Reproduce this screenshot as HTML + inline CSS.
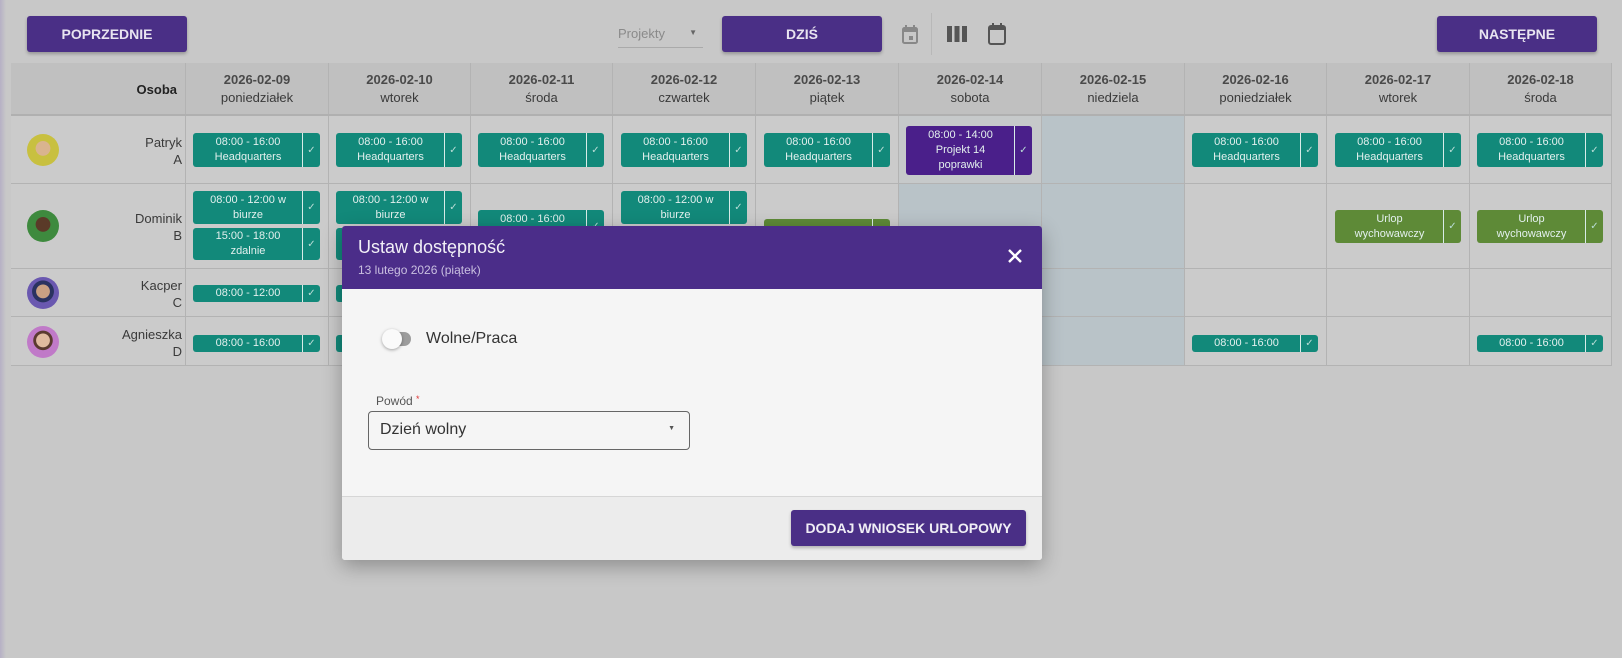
<!DOCTYPE html>
<html><head><meta charset="utf-8"><style>
*{box-sizing:border-box;margin:0;padding:0}
body{width:1622px;height:658px;background:#c8c8c8;font-family:"Liberation Sans",sans-serif;position:relative;overflow:hidden;color:#2a2a2a}
.a{position:absolute}
.btn{position:absolute;background:#4a2f86;color:#e8e4f0;font-weight:bold;font-size:14px;display:flex;align-items:center;justify-content:center;border-radius:3px;box-shadow:0 2px 3px rgba(0,0,0,.25)}
.hc{position:absolute;top:63px;height:52px;background:#c0c0c0;border-right:1px solid #b3b3b3;text-align:center;font-size:13px;color:#3a3a3a;line-height:18px;padding-top:8px}
.hc b{color:#4a4a4a}
.cell{position:absolute;border-right:1px solid #b3b3b3;border-bottom:1px solid #b3b3b3;background:#cbcbcb}
.we{background:#b9c3c8}
.ch{position:absolute;background:#12897a;color:#e3f0ee;font-size:11px;text-align:center;border-radius:3px;line-height:15px;display:flex;align-items:center;justify-content:center;padding-right:17px}
.ch:after{content:"✓";position:absolute;right:0;top:0;bottom:0;width:17px;border-left:1px solid #d8ece8;display:flex;align-items:center;justify-content:center;font-size:10px;color:#b9ddd6}
.g{background:#5e8a37}
.p{background:#4a1f8a}
.nm{position:absolute;right:0;width:150px;text-align:right;font-size:13px;line-height:17px;color:#3a3a3a}
.av{position:absolute;left:27px;width:32px;height:32px;border-radius:50%}
</style></head><body>
<div class="btn" style="left:27px;top:16px;width:160px;height:36px">POPRZEDNIE</div>
<div class="a" style="left:618px;top:26px;width:85px;height:22px;border-bottom:1px solid #aaa;font-size:13px;color:#8a8a8a">Projekty<span style="position:absolute;right:6px;top:2px;font-size:8px;color:#666">▼</span></div>
<div class="btn" style="left:722px;top:16px;width:160px;height:36px">DZIŚ</div>
<svg class="a" style="left:900px;top:24px" width="20" height="22" viewBox="0 0 20 22"><rect x="3" y="4" width="14" height="15" rx="1.5" fill="none" stroke="#888" stroke-width="2"/><rect x="3" y="4" width="14" height="4" fill="#888"/><rect x="5" y="1" width="2" height="4" fill="#888"/><rect x="13" y="1" width="2" height="4" fill="#888"/><rect x="9" y="12" width="4" height="4" fill="#888"/></svg>
<div class="a" style="left:931px;top:13px;width:1px;height:42px;background:#b8b8b8"></div>
<svg class="a" style="left:946px;top:25px" width="22" height="18"><rect x="1" y="1" width="5" height="16" fill="#555"/><rect x="8.5" y="1" width="5" height="16" fill="#555"/><rect x="16" y="1" width="5" height="16" fill="#555"/></svg>
<svg class="a" style="left:987px;top:22px" width="20" height="24" viewBox="0 0 20 24"><rect x="2" y="4" width="16" height="18" rx="2" fill="none" stroke="#555" stroke-width="2"/><rect x="2" y="4" width="16" height="4" fill="#555"/><rect x="5" y="1" width="2" height="4" fill="#555"/><rect x="13" y="1" width="2" height="4" fill="#555"/></svg>
<div class="btn" style="left:1437px;top:16px;width:160px;height:36px">NASTĘPNE</div>

<div class="hc" style="left:11px;width:175px;text-align:right;padding-right:8px;padding-top:18px;font-weight:bold;color:#222">Osoba</div>
<div class="hc" style="left:186px;width:143px"><b>2026-02-09</b><br>poniedziałek</div>
<div class="hc" style="left:329px;width:142px"><b>2026-02-10</b><br>wtorek</div>
<div class="hc" style="left:471px;width:142px"><b>2026-02-11</b><br>środa</div>
<div class="hc" style="left:613px;width:143px"><b>2026-02-12</b><br>czwartek</div>
<div class="hc" style="left:756px;width:143px"><b>2026-02-13</b><br>piątek</div>
<div class="hc" style="left:899px;width:143px"><b>2026-02-14</b><br>sobota</div>
<div class="hc" style="left:1042px;width:143px"><b>2026-02-15</b><br>niedziela</div>
<div class="hc" style="left:1185px;width:142px"><b>2026-02-16</b><br>poniedziałek</div>
<div class="hc" style="left:1327px;width:143px"><b>2026-02-17</b><br>wtorek</div>
<div class="hc" style="left:1470px;width:142px"><b>2026-02-18</b><br>środa</div>
<div class="a" style="left:11px;top:114px;width:1601px;height:2px;background:#b0b0b0"></div>

<div id="grid"></div>
<script>
var cols=[11,186,329,471,613,756,899,1042,1185,1327,1470,1612];
var rows=[116,184,269,317,366];
var h='';
for(var r=0;r<4;r++)for(var c=0;c<11;c++){
 var we=(c==7)||(c==6&&r>0);
 var bg=(c==6&&r==0)?'background:#c6c9ca;':'';
 h+='<div class="cell'+(we?' we':'')+'" style="'+bg+'left:'+cols[c]+'px;top:'+rows[r]+'px;width:'+(cols[c+1]-cols[c])+'px;height:'+(rows[r+1]-rows[r])+'px"></div>';
}
document.getElementById('grid').innerHTML=h;
</script>

<div class="av" style="top:134px;background:radial-gradient(circle at 50% 45%,#d9b48f 0 30%,#c8c040 32%)"></div>
<div class="nm" style="left:32px;top:134px">Patryk<br>A</div>
<div class="av" style="top:210px;background:radial-gradient(circle at 50% 45%,#5a3a28 0 30%,#3e8a3e 32%)"></div>
<div class="nm" style="left:32px;top:210px">Dominik<br>B</div>
<div class="av" style="top:277px;background:radial-gradient(circle at 50% 45%,#c9a083 0 28%,#2a3260 30% 45%,#6a58b0 47%)"></div>
<div class="nm" style="left:32px;top:277px">Kacper<br>C</div>
<div class="av" style="top:326px;background:radial-gradient(circle at 50% 45%,#e0bba0 0 28%,#5a3a30 30% 40%,#c07ac8 42%)"></div>
<div class="nm" style="left:32px;top:326px">Agnieszka<br>D</div>

<div class="ch" style="left:193px;top:133px;width:127px;height:34px">08:00 - 16:00<br>Headquarters</div>
<div class="ch" style="left:336px;top:133px;width:126px;height:34px">08:00 - 16:00<br>Headquarters</div>
<div class="ch" style="left:478px;top:133px;width:126px;height:34px">08:00 - 16:00<br>Headquarters</div>
<div class="ch" style="left:621px;top:133px;width:126px;height:34px">08:00 - 16:00<br>Headquarters</div>
<div class="ch" style="left:764px;top:133px;width:126px;height:34px">08:00 - 16:00<br>Headquarters</div>
<div class="ch p" style="left:906px;top:126px;width:126px;height:49px">08:00 - 14:00<br>Projekt 14<br>poprawki</div>
<div class="ch" style="left:1192px;top:133px;width:126px;height:34px">08:00 - 16:00<br>Headquarters</div>
<div class="ch" style="left:1335px;top:133px;width:126px;height:34px">08:00 - 16:00<br>Headquarters</div>
<div class="ch" style="left:1477px;top:133px;width:126px;height:34px">08:00 - 16:00<br>Headquarters</div>
<div class="ch" style="left:193px;top:191px;width:127px;height:33px">08:00 - 12:00 w<br>biurze</div>
<div class="ch" style="left:193px;top:228px;width:127px;height:32px">15:00 - 18:00<br>zdalnie</div>
<div class="ch" style="left:336px;top:191px;width:126px;height:33px">08:00 - 12:00 w<br>biurze</div>
<div class="ch" style="left:336px;top:228px;width:126px;height:32px">15:00 - 18:00<br>zdalnie</div>
<div class="ch" style="left:478px;top:210px;width:126px;height:33px">08:00 - 16:00<br>&nbsp;</div>
<div class="ch" style="left:621px;top:191px;width:126px;height:33px">08:00 - 12:00 w<br>biurze</div>
<div class="ch g" style="left:764px;top:219px;width:126px;height:33px">Dzień wolny</div>
<div class="ch g" style="left:1335px;top:210px;width:126px;height:33px">Urlop<br>wychowawczy</div>
<div class="ch g" style="left:1477px;top:210px;width:126px;height:33px">Urlop<br>wychowawczy</div>
<div class="ch" style="left:193px;top:285px;width:127px;height:17px">08:00 - 12:00</div>
<div class="ch" style="left:336px;top:285px;width:126px;height:17px">08:00 - 12:00</div>
<div class="ch" style="left:193px;top:335px;width:127px;height:17px">08:00 - 16:00</div>
<div class="ch" style="left:336px;top:335px;width:126px;height:17px">08:00 - 16:00</div>
<div class="ch" style="left:1192px;top:335px;width:126px;height:17px">08:00 - 16:00</div>
<div class="ch" style="left:1477px;top:335px;width:126px;height:17px">08:00 - 16:00</div>

<div class="a" style="left:0;top:0;width:6px;height:658px;background:linear-gradient(90deg,rgba(140,120,190,.3),transparent)"></div>

<div class="a" style="left:342px;top:226px;width:700px;height:334px;background:#f5f5f5;border-radius:3px;box-shadow:0 6px 20px rgba(0,0,0,.3);overflow:hidden">
 <div class="a" style="left:0;top:0;width:700px;height:63px;background:#4b2d89"></div>
 <div class="a" style="left:16px;top:11px;font-size:18px;color:#f2f0f7">Ustaw dostępność</div>
 <div class="a" style="left:16px;top:37px;font-size:12px;color:#c9bfe0">13 lutego 2026 (piątek)</div>
 <svg class="a" style="left:665px;top:22px" width="16" height="16"><path d="M2 2L14 14M14 2L2 14" stroke="#fff" stroke-width="2.4"/></svg>
 <div class="a" style="left:43px;top:106px;width:26px;height:14px;border-radius:7px;background:#9c9c9c"></div>
 <div class="a" style="left:40px;top:103px;width:20px;height:20px;border-radius:50%;background:#fafafa;box-shadow:0 1px 3px rgba(0,0,0,.35)"></div>
 <div class="a" style="left:84px;top:104px;font-size:16px;color:#333">Wolne/Praca</div>
 <div class="a" style="left:34px;top:168px;font-size:12px;color:#555">Powód <span style="color:#d33;font-size:9px;vertical-align:top">*</span></div>
 <div class="a" style="left:26px;top:185px;width:322px;height:39px;border:1.5px solid #666;border-radius:4px;font-size:16px;color:#333;padding:9px 0 0 11px">Dzień wolny<span style="position:absolute;right:14px;top:13px;font-size:7px;color:#555">▼</span></div>
 <div class="a" style="left:0;top:270px;width:700px;height:64px;background:#ececec;border-top:1px solid #d6d6d6"></div>
 <div class="btn" style="left:449px;top:284px;width:235px;height:36px;font-size:14px;color:#f0eef5">DODAJ WNIOSEK URLOPOWY</div>
</div>
</body></html>
